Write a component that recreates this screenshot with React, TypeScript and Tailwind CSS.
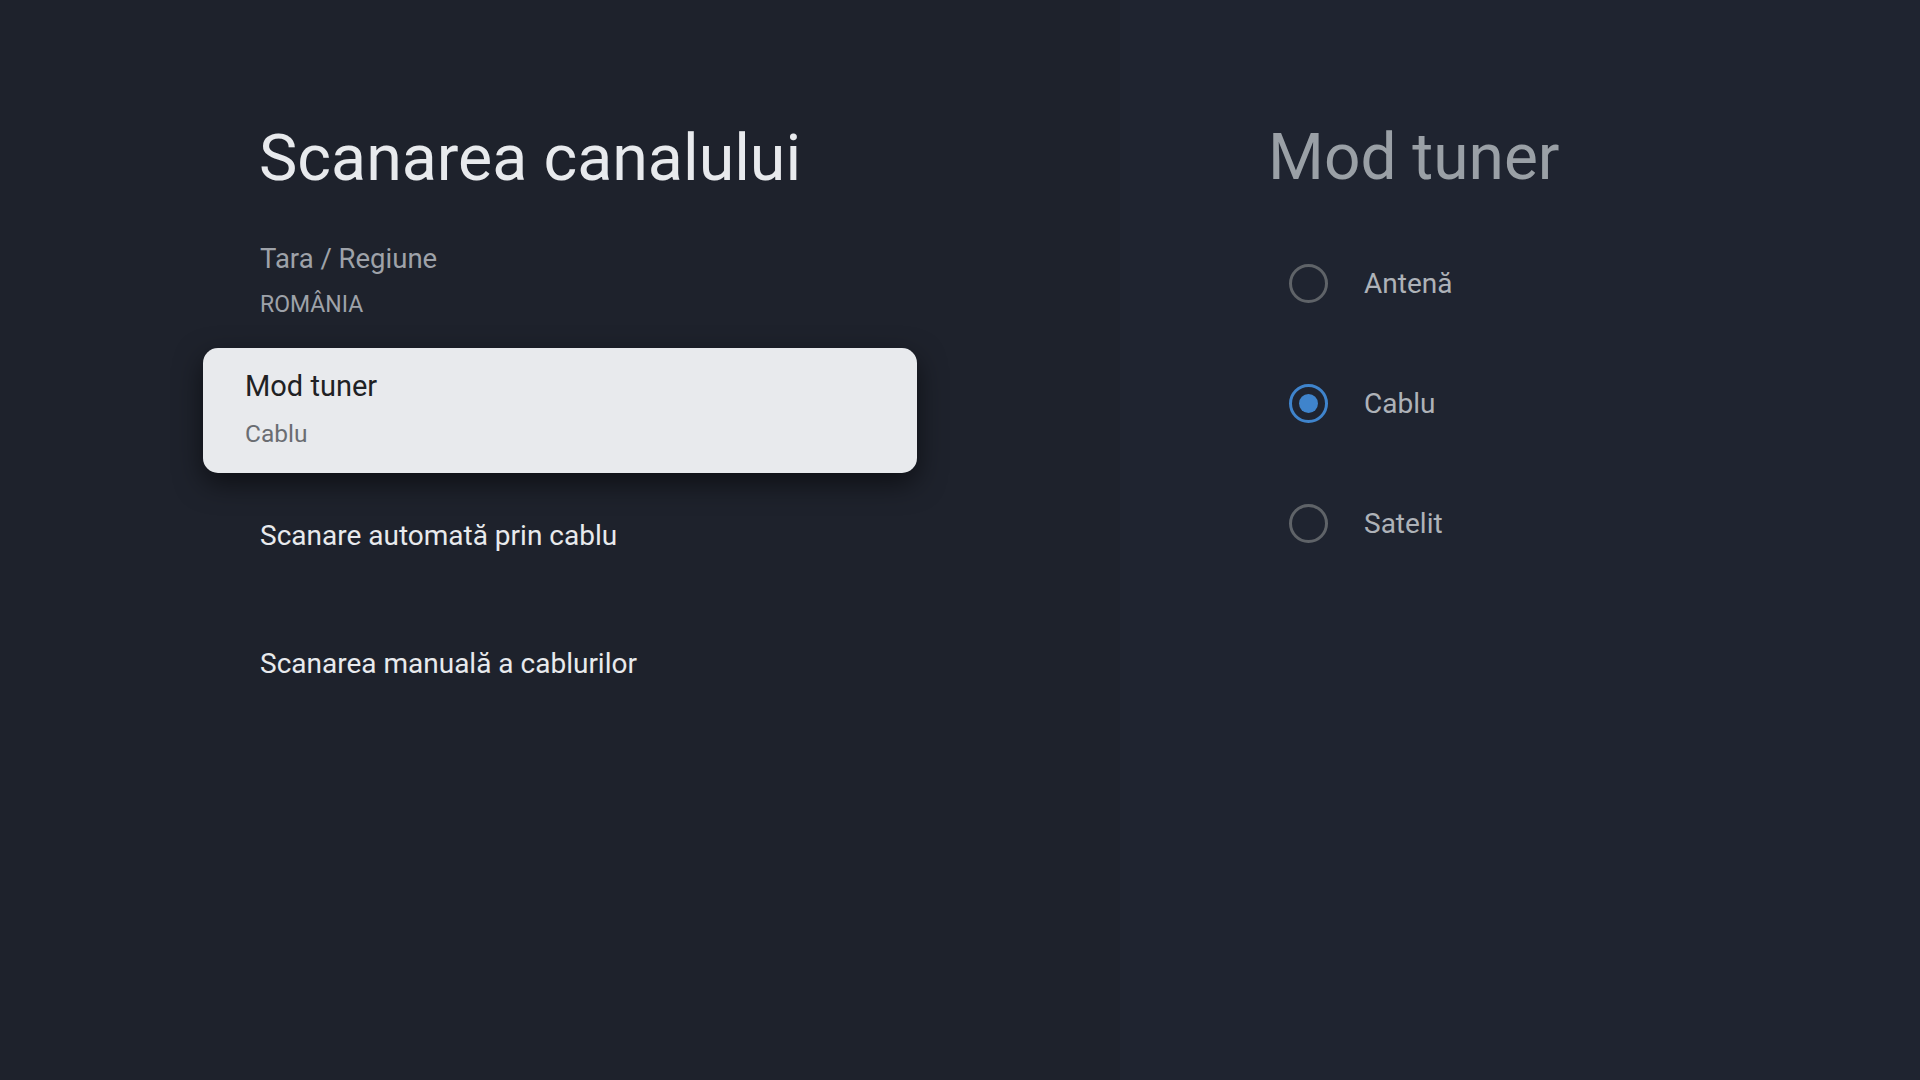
import React from "react";

const font = { fontFamily: "Roboto, 'Noto Sans', sans-serif" };

function Radio({ checked }: { checked: boolean }) {
  return (
    <div
      className={`w-[39px] h-[39px] rounded-full border-[3.5px] flex items-center justify-center shrink-0 ${
        checked ? "border-[#3f84cc]" : "border-[#5f6368]"
      }`}
    >
      {checked && <div className="w-[19px] h-[19px] rounded-full bg-[#3f84cc]" />}
    </div>
  );
}

export default function App() {
  const options = [
    { label: "Antenă", checked: false },
    { label: "Cablu", checked: true },
    { label: "Satelit", checked: false },
  ];
  return (
    <div
      className="w-[1920px] h-[1080px] flex bg-[#1e222c] overflow-hidden antialiased"
      style={font}
    >
      {/* Left panel */}
      <div className="w-[1120px] h-full flex flex-col pt-[120px] pl-[203px]">
        <div className="pl-[56px] text-[64.5px] leading-[76px] text-[#e8eaed] font-normal">
          Scanarea canalului
        </div>
        <div className="pl-[57px] mt-[47px] text-[27.5px] leading-[32px] text-[#9ea2a9]">
          Tara / Regiune
        </div>
        <div className="pl-[57px] mt-[16px] text-[23px] leading-[28px] text-[#9ea2a9]">
          ROMÂNIA
        </div>
        <div className="mt-[29px] w-[714px] h-[125px] rounded-[15px] bg-[#e8eaed] shadow-[0_10px_28px_rgba(0,0,0,0.55)] pl-[42px] pt-[20px] flex flex-col">
          <div className="text-[29px] leading-[37px] text-[#202124]">Mod tuner</div>
          <div className="mt-[14px] text-[24.5px] leading-[30px] text-[#6a6d72]">Cablu</div>
        </div>
        <div className="pl-[57px] mt-[45px] text-[28px] leading-[36px] text-[#e8eaed]">
          Scanare automată prin cablu
        </div>
        <div className="pl-[57px] mt-[92px] text-[28px] leading-[36px] text-[#e8eaed]">
          Scanarea manuală a cablurilor
        </div>
      </div>

      {/* Right panel */}
      <div className="flex-1 h-full bg-[#1f2430] flex flex-col pt-[120px] pl-[148px]">
        <div className="text-[64px] leading-[76px] text-[#9aa0a6]">Mod tuner</div>
        <div className="mt-[68px] flex flex-col gap-[81px] pl-[21px]">
          {options.map((o) => (
            <div key={o.label} className="flex items-center h-[39px]">
              <Radio checked={o.checked} />
              <div className="ml-[36px] text-[28px] leading-[36px] text-[#aeb2b8]">
                {o.label}
              </div>
            </div>
          ))}
        </div>
      </div>
    </div>
  );
}
